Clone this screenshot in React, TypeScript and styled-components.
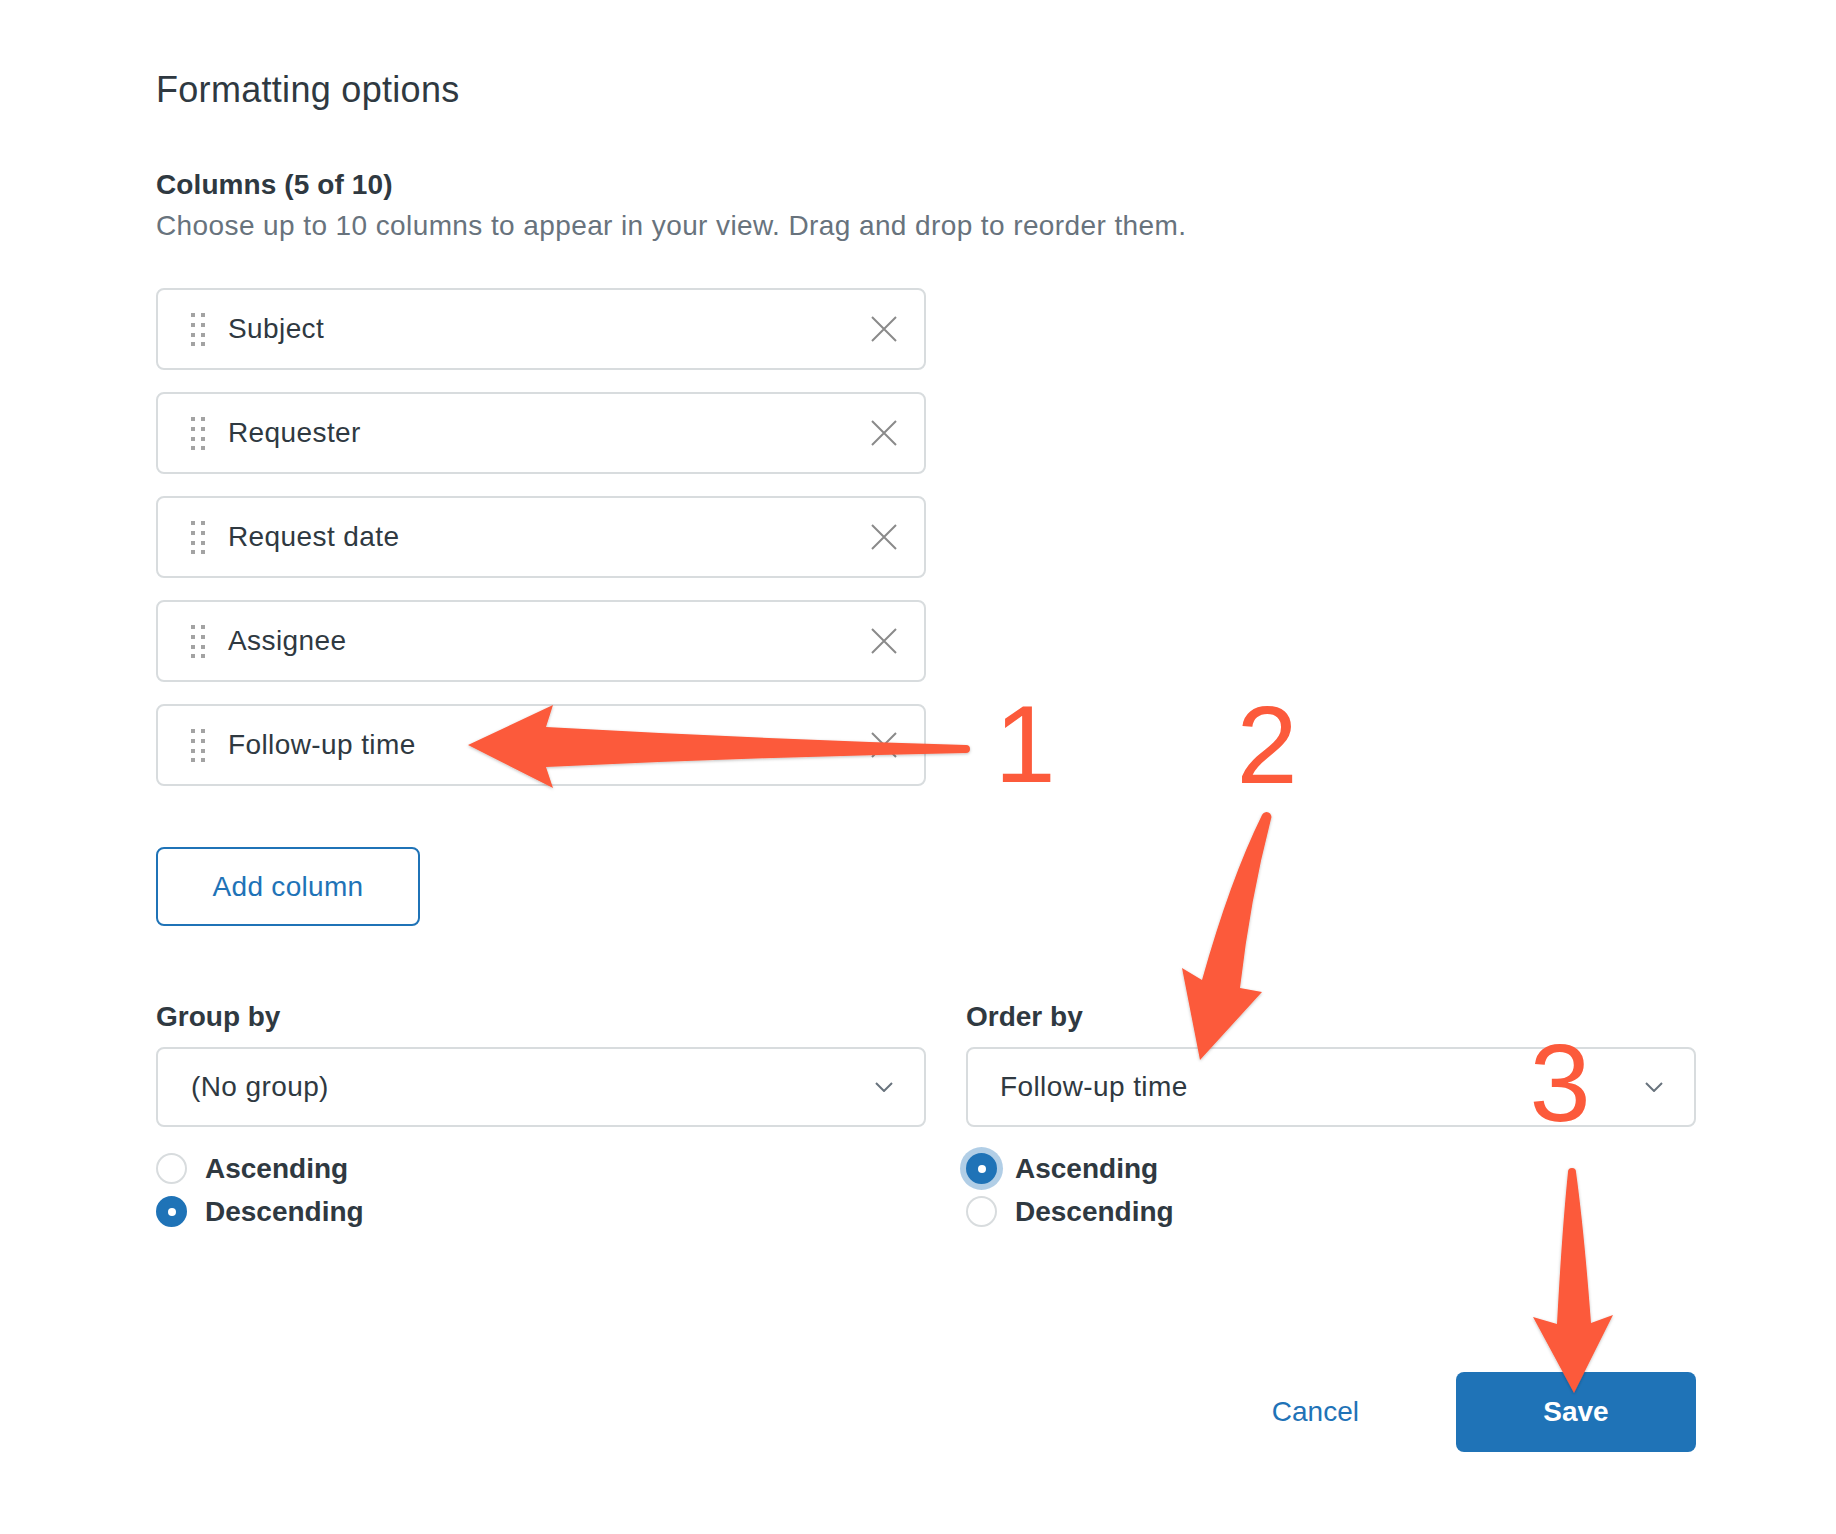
import React from "react";
import styled, { createGlobalStyle } from "styled-components";

const GlobalStyle = createGlobalStyle`
  html, body {
    margin: 0;
    padding: 0;
    background: #ffffff;
  }
  body {
    font-family: "Liberation Sans", Arial, Helvetica, sans-serif;
    color: #2f3941;
  }
  * { box-sizing: border-box; }
`;

const Page = styled.div`
  position: relative;
  width: 1836px;
  min-height: 1534px;
  background: #ffffff;
`;

const Content = styled.div`
  width: 1696px;
  padding: 68px 0 0 156px;
  display: flex;
  flex-direction: column;
  align-items: flex-start;
`;

const Title = styled.h1`
  margin: 0;
  font-size: 36px;
  line-height: 44px;
  font-weight: 400;
  letter-spacing: 0.3px;
  color: #2f3941;
`;

const SectionTitle = styled.h2`
  margin: 53px 0 0;
  font-size: 28px;
  line-height: 40px;
  font-weight: 700;
  letter-spacing: 0.1px;
  color: #2f3941;
`;

const Hint = styled.p`
  margin: 1px 0 0;
  font-size: 28px;
  line-height: 40px;
  letter-spacing: 0.4px;
  color: #68737d;
`;

const ColumnList = styled.div`
  margin-top: 42px;
  width: 770px;
  display: flex;
  flex-direction: column;
  gap: 22px;
`;

const ColumnItem = styled.div`
  height: 82px;
  border: 2px solid #d8dcde;
  border-radius: 8px;
  display: flex;
  align-items: center;
  padding: 0 27px 0 33px;
  background: #fff;
`;

const ItemLabel = styled.span`
  flex: 1;
  margin-left: 23px;
  font-size: 28px;
  letter-spacing: 0.4px;
  color: #2f3941;
`;

const IconButton = styled.button`
  border: 0;
  background: transparent;
  padding: 0;
  width: 26px;
  height: 26px;
  display: flex;
  align-items: center;
  justify-content: center;
  cursor: pointer;
`;

const AddButton = styled.button`
  margin-top: 61px;
  width: 264px;
  height: 79px;
  border: 2px solid #1f73b7;
  border-radius: 8px;
  background: #fff;
  color: #1f73b7;
  font-family: inherit;
  font-size: 28px;
  letter-spacing: 0.3px;
  cursor: pointer;
`;

const SortGrid = styled.div`
  margin-top: 71px;
  display: grid;
  grid-template-columns: 770px 730px;
  column-gap: 40px;
`;

const Field = styled.div`
  display: flex;
  flex-direction: column;
`;

const FieldLabel = styled.label`
  font-size: 28px;
  line-height: 40px;
  font-weight: 700;
  color: #2f3941;
`;

const Select = styled.div<{ $padLeft: number }>`
  margin-top: 10px;
  height: 80px;
  border: 2px solid #d8dcde;
  border-radius: 8px;
  display: flex;
  align-items: center;
  justify-content: space-between;
  padding: 0 31px 0 ${(p) => p.$padLeft}px;
  font-size: 28px;
  letter-spacing: 0.4px;
  color: #2f3941;
`;

const RadioGroup = styled.div`
  margin-top: 20px;
  display: flex;
  flex-direction: column;
`;

const RadioRow = styled.div`
  height: 43px;
  display: flex;
  align-items: center;
  gap: 18px;
`;

const RadioCircle = styled.span<{ $checked?: boolean; $focused?: boolean }>`
  width: 31px;
  height: 31px;
  border-radius: 50%;
  border: 2px solid ${(p) => (p.$checked ? "#1f73b7" : "#d8dcde")};
  background: ${(p) => (p.$checked ? "#1f73b7" : "#fff")};
  display: flex;
  align-items: center;
  justify-content: center;
  box-shadow: ${(p) => (p.$focused ? "0 0 0 6px rgba(31,115,183,0.35)" : "none")};
  flex: none;
  &::after {
    content: "";
    width: 8px;
    height: 8px;
    border-radius: 50%;
    background: #fff;
    display: ${(p) => (p.$checked ? "block" : "none")};
  }
`;

const RadioLabel = styled.span`
  font-size: 28px;
  font-weight: 700;
  color: #2f3941;
`;

const Footer = styled.div`
  align-self: stretch;
  margin-top: 139px;
  display: flex;
  justify-content: flex-end;
  align-items: center;
`;

const CancelButton = styled.button`
  border: 0;
  background: transparent;
  padding: 0;
  margin-right: 97px;
  color: #1f73b7;
  font-family: inherit;
  font-size: 28px;
  cursor: pointer;
`;

const SaveButton = styled.button`
  width: 240px;
  height: 80px;
  border: 0;
  border-radius: 8px;
  background: #1f73b7;
  color: #fff;
  font-family: inherit;
  font-size: 28px;
  font-weight: 700;
  cursor: pointer;
`;

const Annotations = styled.svg`
  position: absolute;
  top: 0;
  left: 0;
  width: 1836px;
  height: 1534px;
  pointer-events: none;
`;

const StepNumber = styled.text`
  font-family: "Liberation Sans", Arial, Helvetica, sans-serif;
  font-size: 110px;
  fill: #fc5a3b;
`;

const DragHandle = () => (
  <svg width="14" height="33" viewBox="0 0 14 33" aria-hidden>
    {[0, 10, 20, 29].map((y) =>
      [0, 10].map((x) => (
        <rect key={`${x}-${y}`} x={x} y={y} width="4" height="4" fill="#a3a3a3" />
      ))
    )}
  </svg>
);

const CloseIcon = () => (
  <svg width="26" height="26" viewBox="0 0 26 26" aria-hidden>
    <path d="M1 1 L25 25 M25 1 L1 25" stroke="#8a8a8a" strokeWidth="2" fill="none" />
  </svg>
);

const Chevron = () => (
  <svg width="18" height="10" viewBox="0 0 18 10" aria-hidden>
    <path d="M1 1 L9 9 L17 1" stroke="#68737d" strokeWidth="2" fill="none" />
  </svg>
);

const columns = ["Subject", "Requester", "Request date", "Assignee", "Follow-up time"];

type RadioProps = { label: string; checked?: boolean; focused?: boolean };
const Radio = ({ label, checked, focused }: RadioProps) => (
  <RadioRow>
    <RadioCircle $checked={checked} $focused={focused} />
    <RadioLabel>{label}</RadioLabel>
  </RadioRow>
);

export default function App() {
  return (
    <Page>
      <GlobalStyle />
      <Content>
        <Title>Formatting options</Title>
        <SectionTitle>Columns (5 of 10)</SectionTitle>
        <Hint>Choose up to 10 columns to appear in your view. Drag and drop to reorder them.</Hint>
        <ColumnList>
          {columns.map((c) => (
            <ColumnItem key={c}>
              <DragHandle />
              <ItemLabel>{c}</ItemLabel>
              <IconButton aria-label={`Remove ${c}`}>
                <CloseIcon />
              </IconButton>
            </ColumnItem>
          ))}
        </ColumnList>
        <AddButton>Add column</AddButton>
        <SortGrid>
          <Field>
            <FieldLabel>Group by</FieldLabel>
            <Select $padLeft={33}>
              <span>(No group)</span>
              <Chevron />
            </Select>
            <RadioGroup>
              <Radio label="Ascending" />
              <Radio label="Descending" checked />
            </RadioGroup>
          </Field>
          <Field>
            <FieldLabel>Order by</FieldLabel>
            <Select $padLeft={32}>
              <span>Follow-up time</span>
              <Chevron />
            </Select>
            <RadioGroup>
              <Radio label="Ascending" checked focused />
              <Radio label="Descending" />
            </RadioGroup>
          </Field>
        </SortGrid>
        <Footer>
          <CancelButton>Cancel</CancelButton>
          <SaveButton>Save</SaveButton>
        </Footer>
      </Content>
      <Annotations viewBox="0 0 1836 1534">
        <defs>
          <filter id="shadow" x="-10%" y="-10%" width="120%" height="120%">
            <feDropShadow dx="0" dy="1" stdDeviation="1.5" floodColor="#000" floodOpacity="0.25" />
          </filter>
        </defs>
        <g fill="#fc5a3b" filter="url(#shadow)">
          <path d="M468,745 L553,705 L546,727 Q760,739 966,745 A4,4 0 0 1 966,753 Q760,757 546,767 L553,788 Z" />
          <path d="M1200,1060 L1182,968 L1202,980 Q1230,880 1262,815 A4.5,4.5 0 0 1 1271,819 Q1250,900 1240,988 L1262,992 Z" />
          <path d="M1574,1393 L1533,1317 L1557,1324 Q1562,1230 1568,1172 A4,4 0 0 1 1576,1172 Q1584,1230 1591,1323 L1613,1315 Z" />
        </g>
        <StepNumber x="1025" y="782" textAnchor="middle">1</StepNumber>
        <StepNumber x="1267" y="783" textAnchor="middle">2</StepNumber>
        <StepNumber x="1560" y="1121" textAnchor="middle">3</StepNumber>
      </Annotations>
    </Page>
  );
}
